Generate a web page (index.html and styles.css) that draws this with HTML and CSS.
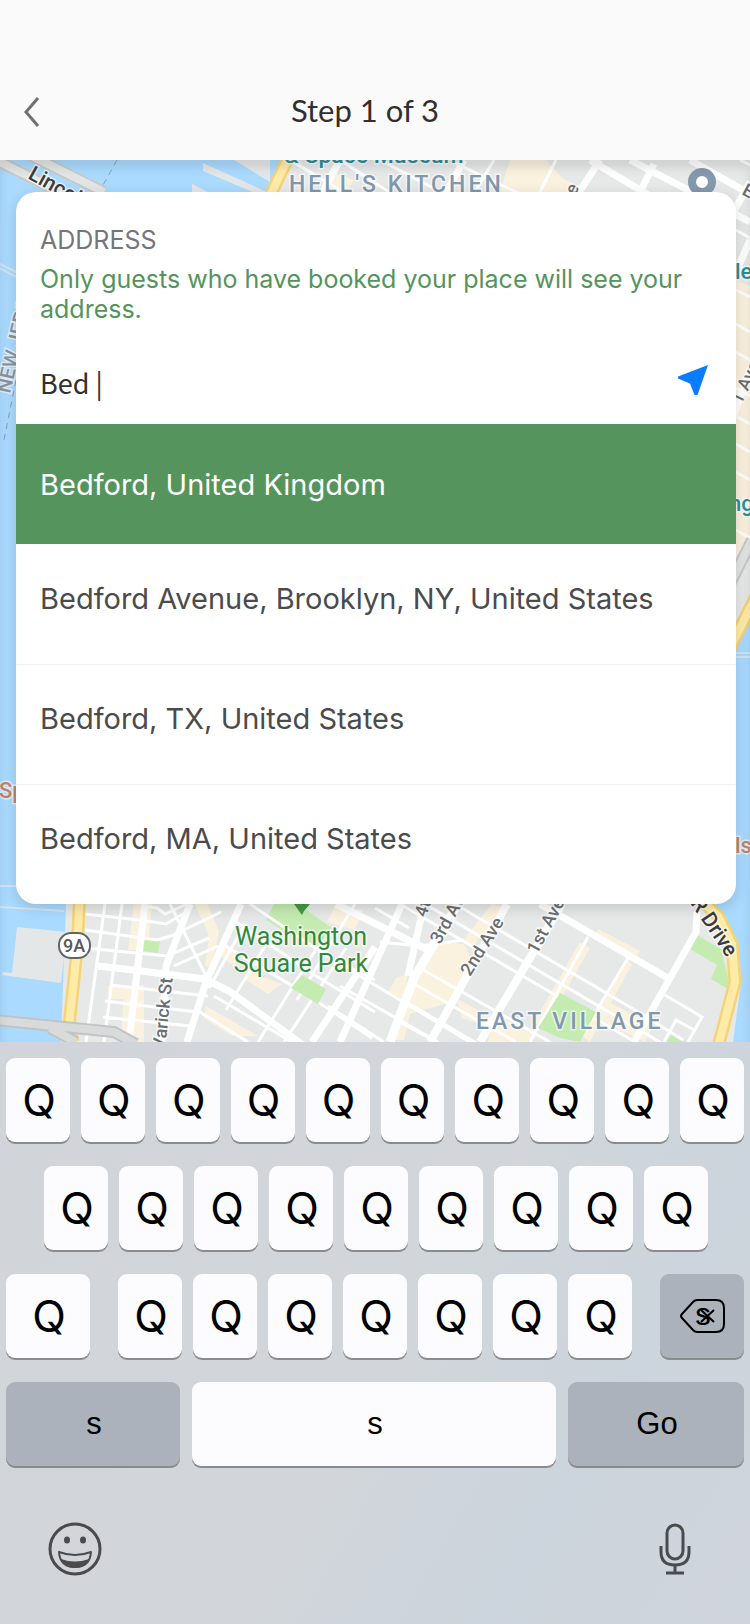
FILE: index.html
```html
<!DOCTYPE html>
<html lang="en">
<head>
  <meta charset="UTF-8">
  <meta name="viewport" content="width=device-width, initial-scale=1">
  <title>Step 1 of 3</title>
  <link rel="stylesheet" href="styles.css">
</head>
<body>

  <header class="topbar">
    <button type="button" class="back" aria-label="Back">
      <svg width="16" height="32" viewBox="0 0 16 32"><path d="M14 2L2 16l12 14" fill="none" stroke="#6f7072" stroke-width="3"/></svg>
    </button>
    <h1>Step 1 of 3</h1>
  </header>

  <main class="map-area">
    <svg class="map" viewBox="0 160 750 882" preserveAspectRatio="xMidYMin slice" aria-hidden="true">
      <rect y="160" width="750" height="882" fill="#e7e9e9"/>

      <!-- built up blocks -->
      <g fill="#faf1de">
        <path d="M510 160h36l16 18 22 12-10 14h-78zM330 172l24 8-12 20h-28z"/>
        <path d="M736 280l14 6v264l-14 22z"/>
        <path d="M134 904h18l-4 46h-20zM195 904h13l11 28-8 36-6-2 4-30zM226 944l14 10-6 12-14-10zM108 985h36v64h-23l2-50h-15zM250 972l32 12-14 10-22-14zM206 1006l52 30h-26l-28-18zM335 906l28 4-8 20-28-8z"/>
        <path d="M492 904l16 4-18 36-12-6-4 10-12-6zM430 940l34 4 8 16-20 42-42 12-6 26h-12zM396 978l12-4-4 26-16-8zM456 998l40 22-4 8-30-10zM496 1016l40 18-4 8h-44z"/>
        <path d="M598 929l42 22-4 6-42-20zM580 942l10 6-46 80-10-6zM626 960l6 4-42 78-8-6zM605 1000l48 25-8 17-50-24z"/>
      </g>

      <!-- rivers -->
      <g fill="#aadaff">
        <path d="M0 160h284l-20 34L80 860l-14 44-5 138H0z"/>
        <path d="M750 612v430h-17l8-60-3-34-14-28-30-30V690z"/>
      </g>
      <path d="M17 927l50 5-6 51-59-8 1-3 9 1z" fill="#e4e7e7"/>
      <path d="M203 163l66 30h-14l-52-22zM192 184l24 12h-24zM234 160h36v22z" fill="#e4e7e7"/>
      <path d="M0 886h16M0 907l64 4M0 268l18 10M0 264l18 9M734 653h16M734 657h16" fill="none" stroke="#d3e5f3" stroke-width="2"/>
      <path d="M117 160L97 196M16 380L4 440" fill="none" stroke="#8aa0b2" stroke-dasharray="6 5"/>

      <!-- parks -->
      <g fill="#c4ecb1">
        <path d="M274 904h24l34 24-17 21-49-29zM143 939l17 2-2 12-15-2zM697 935l24 14 10 42-20-12 6-14-27-16zM672 1034l12 8h-18z"/>
      </g>

      <!-- small streets -->
      <g fill="none" stroke="#fff" stroke-width="3">
        <path d="M380 160l80 42M455 163l80 38M290 160l60 36M340 160l52 34M470 200l24-40M536 200l20-40M740 160l10 5"/>
        <path d="M85 914l55 6 26 4 20-12M85 930l72 10 14-4 50-24M85 948l82 8 42-18M110 985l98 11M105 1001l92 11M103 1017l87 9M105 904L86 1042M122 904l-18 138M170 904l37 74M174 966l44-20M145 906l12 2 8 6 22-10"/>
        <path d="M233 920l80 54 62 38M222 944l84 50 66 44M250 904l80 54 45 22M214 996l78 46M200 1012l48 30M245 924l-36 64M270 938l-44 72M318 946l-60 96M346 948l-62 94M355 904l-58 96"/>
        <path d="M375 908l34 20M380 942l40 4 44-6M400 904l300 176M425 904l262 154M455 904l180 106 48 30M350 970l80 48 40 24M340 986l98 56M420 968l130 74M414 984l102 58M406 1002l72 42M396 1020l44 24M328 1006l56 36"/>
        <path d="M588 937l-58 105M628 958l-50 84M665 995l37 22-14 25M664 1042l12-22 18 10"/>
        <path d="M736 230l14 8M736 290l14 7M736 324l14 8M736 352l14 8M736 388l14 8M736 416l14 8M736 444l14 8M736 472l14 8M736 530l14 8"/>
      </g>
      <path d="M302 975l24 14-8 15-27-16zM560 993l36 19-16 30-20-4-22-10z" fill="#c4ecb1"/>

      <!-- avenues -->
      <g fill="none" stroke="#fff" stroke-width="7">
        <path d="M318 200l22-40M442 200l22-40M574 200l26-40M636 200l18-36M590 160l70 42M630 160l120 62M690 160l60 34M750 182l-22 40M750 240l-20 46M750 370l-20 56"/>
        <path d="M145 904l-16 138M190 904l-24 62-4 76M241 904l-35 78-19 60M98 966l35 4 72 9 24 12 74 54M375 947l-63 95M336 904l92 46"/>
        <path d="M402 904l-62 138M424 904l-16 72M540 904l128 74" />
        <path d="M458 904l-44 74-24 64" stroke-width="9"/>
        <path d="M507 904l-77 138M562 904l-82 138" stroke-width="8"/>
        <path d="M697 912l-1 20-62 110"/>
      </g>

      <!-- highways -->
      <g fill="none">
        <path d="M80 890l-3 60-8 76 4 16M294 146l-24 50M756 596l-40 80M690 890l28 26 14 28 3 38-12 46-6 22" stroke="#f4d477" stroke-width="13"/>
        <path d="M80 890l-3 60-8 76 4 16M294 146l-24 50M756 596l-40 80M690 890l28 26 14 28 3 38-12 46-6 22" stroke="#ffeba8" stroke-width="8"/>
        <path d="M-4 1020l58 6 60 6 22 12M50 1028l26 14" stroke="#bfc5c5" stroke-width="12"/>
        <path d="M-4 1020l58 6 60 6 22 12M50 1028l26 14" stroke="#d9dbdb" stroke-width="8"/>
        <path d="M-4 160l50 25 60 28M24 152l80 40M752 540l-24 48" stroke="#c6caca" stroke-width="12"/>
        <path d="M-4 160l50 25 60 28M24 152l80 40M752 540l-24 48" stroke="#e3e5e5" stroke-width="8"/>
      </g>

      <path d="M294 904h16l-6 7-2 4-3-4z" fill="#429a46"/>
      <circle cx="702" cy="182" r="10" fill="#fff" stroke="#8499ad" stroke-width="8"/>
      <rect x="59" y="933" width="31" height="25" rx="12" fill="#fff" stroke="#626569" stroke-width="2"/>

      <g class="map-label">
        <text x="284" y="163" font-size="23" fill="#2f8e96">&amp; Space Museum</text>
        <text x="289" y="192" class="district">HELL'S KITCHEN</text>
        <text x="476" y="1029" class="district">EAST VILLAGE</text>
        <text x="301" y="945" class="park">Washington</text>
        <text x="301" y="972" class="park">Square Park</text>
        <text x="74" y="952" font-size="18" text-anchor="middle" fill="#55585c">9A</text>
        <text transform="translate(27 178) rotate(29)" font-size="21" fill="#3c3a3a">Lincoln</text>
        <text transform="translate(10 394) rotate(-77)" font-size="20" fill="#8d9499">NEW JERSEY</text>
        <text transform="translate(165 1050) rotate(-84)" class="street">Varick St</text>
        <text transform="translate(426 918) rotate(-72)" class="street">4th Ave</text>
        <text transform="translate(440 945) rotate(-61)" class="street">3rd Ave</text>
        <text transform="translate(470 977) rotate(-58)" class="street">2nd Ave</text>
        <text transform="translate(537 955) rotate(-62)" class="street">1st Avenue</text>
        <text transform="translate(575 196) rotate(-62)" class="street">e</text>
        <text transform="translate(741 194) rotate(28)" class="street">E</text>
        <text transform="translate(741 405) rotate(-64)" class="street">1 Ave</text>
        <text transform="translate(690 903) rotate(56)" font-size="21" fill="#3c3a3a">R Drive</text>
        <text x="735" y="279" font-size="22" fill="#2f8e96">le</text>
        <text x="729" y="511" font-size="22" fill="#2f8e96">ng</text>
        <text x="735" y="853" font-size="22" fill="#c1866a">ls</text>
        <text x="-1" y="798" font-size="22" fill="#c1866a">Sp</text>
      </g>
    </svg>

    <form class="card">
      <div class="card-head">
        <label for="address">ADDRESS</label>
        <p>Only guests who have booked your place will see your address.</p>
      </div>
      <div class="search">
        <input type="text" id="address" value="Bed |" autocomplete="off">
        <button type="button" class="locate" aria-label="Use my location">
          <svg width="30" height="30" viewBox="0 0 30 30"><path d="M30 0L0 11.500v2l12 5L16.500 30h3z" fill="#0a7cff"/></svg>
        </button>
      </div>
      <ul class="results">
        <li><button type="button" class="result active">Bedford, United Kingdom</button></li>
        <li><button type="button" class="result">Bedford Avenue, Brooklyn, NY, United States</button></li>
        <li><button type="button" class="result">Bedford, TX, United States</button></li>
        <li><button type="button" class="result">Bedford, MA, United States</button></li>
      </ul>
    </form>
  </main>

  <section class="keyboard" aria-label="Keyboard">
    <div class="row">
      <button type="button" class="key">Q</button>
      <button type="button" class="key">Q</button>
      <button type="button" class="key">Q</button>
      <button type="button" class="key">Q</button>
      <button type="button" class="key">Q</button>
      <button type="button" class="key">Q</button>
      <button type="button" class="key">Q</button>
      <button type="button" class="key">Q</button>
      <button type="button" class="key">Q</button>
      <button type="button" class="key">Q</button>
    </div>
    <div class="row row-inset">
      <button type="button" class="key">Q</button>
      <button type="button" class="key">Q</button>
      <button type="button" class="key">Q</button>
      <button type="button" class="key">Q</button>
      <button type="button" class="key">Q</button>
      <button type="button" class="key">Q</button>
      <button type="button" class="key">Q</button>
      <button type="button" class="key">Q</button>
      <button type="button" class="key">Q</button>
    </div>
    <div class="row row-wide">
      <button type="button" class="key key-side">Q</button>
      <div class="row letters">
        <button type="button" class="key">Q</button>
        <button type="button" class="key">Q</button>
        <button type="button" class="key">Q</button>
        <button type="button" class="key">Q</button>
        <button type="button" class="key">Q</button>
        <button type="button" class="key">Q</button>
        <button type="button" class="key">Q</button>
      </div>
      <button type="button" class="key key-side dark" aria-label="Delete">
        <svg width="46" height="36" viewBox="0 0 46 36">
          <path d="M17 2h19q8 0 8 8v16q0 8-8 8H17q-2 0-4-2L2 20q-2-2 0-4L13 4q2-2 4-2z" fill="none" stroke="#000" stroke-width="2"/>
          <path d="M21 12l13 12M34 12L21 24" stroke="#000" stroke-width="2"/>
          <text x="23" y="27" class="del-text">s</text>
        </svg>
      </button>
    </div>
    <div class="row row-bottom">
      <button type="button" class="key dark">s</button>
      <button type="button" class="key">s</button>
      <button type="button" class="key dark">Go</button>
    </div>
    <div class="tools">
      <button type="button" aria-label="Emoji">
        <svg width="54" height="54" viewBox="0 0 54 54">
          <circle cx="27" cy="27" r="25" fill="none" stroke="#4b4b4b" stroke-width="3"/>
          <ellipse cx="19" cy="18" rx="3" ry="3.500" fill="#4b4b4b"/>
          <ellipse cx="35" cy="18" rx="3" ry="3.500" fill="#4b4b4b"/>
          <path d="M11 30q16 6 32 0-1 15-16 15T11 30z" fill="none" stroke="#4b4b4b" stroke-width="2" stroke-linejoin="round"/>
          <path d="M13 37q14 5 28 0-3 9-14 9t-14-9z" fill="#4b4b4b"/>
        </svg>
      </button>
      <button type="button" aria-label="Dictate">
        <svg width="54" height="54" viewBox="0 0 54 54">
          <g fill="none" stroke="#4b4b4b" stroke-width="3">
            <rect x="19" y="3" width="16" height="34" rx="8"/>
            <path d="M13 24v6q0 13 14 13t14-13v-6M27 43v8M18 51h18"/>
          </g>
        </svg>
      </button>
    </div>
  </section>

</body>
</html>
```
FILE: styles.css
```css
* {
  box-sizing: border-box;
}

body {
  margin: 0;
  min-height: 100vh;
  display: flex;
  flex-direction: column;
  font-family: Inter, sans-serif;
  background-color: #d1d5db;
}

button {
  padding: 0;
  border: none;
  background: none;
  font-family: inherit;
  cursor: pointer;
}

svg {
  display: block;
}

/* header */
.topbar {
  display: flex;
  align-items: center;
  padding: 64px 24px 0;
  height: 160px;
  background-color: #fafafa;
}

.back {
  width: 32px;
}

.topbar h1 {
  flex: 1;
  margin: 0;
  padding: 0 52px 4px 0;
  font-family: Lato, sans-serif;
  font-size: 31px;
  font-weight: 400;
  line-height: 40px;
  text-align: center;
  color: #322f2e;
}

/* map and address card */
.map-area {
  position: relative;
  padding: 32px 14px 138px 16px;
  overflow: hidden;
  box-shadow: inset 0 8px 10px rgba(0, 0, 0, 0.1);
}

.map {
  position: absolute;
  inset: 0;
  z-index: -1;
  width: 100%;
  height: 100%;
}

.map-label {
  font-family: Roboto, sans-serif;
  font-weight: 500;
  paint-order: stroke;
  stroke: rgba(255, 255, 255, 0.6);
  stroke-width: 3px;
}

.district {
  font-size: 23px;
  letter-spacing: 3px;
  fill: #8198ad;
}

.park {
  font-size: 25px;
  font-weight: 400;
  text-anchor: middle;
  fill: #2f8a39;
}

.street {
  font-size: 18px;
  fill: #6b6e71;
}

.card {
  overflow: hidden;
  border-radius: 20px;
  background-color: #fff;
  box-shadow: 0 4px 14px rgba(0, 0, 0, 0.15);
}

.card-head {
  padding: 32px 24px 0;
}

.card-head label {
  display: block;
  font-size: 25px;
  line-height: 32px;
  color: #75767a;
}

.card-head p {
  margin: 8px 0 0;
  font-size: 25px;
  line-height: 30px;
  color: #55945d;
}

.search {
  display: flex;
  align-items: center;
  height: 100px;
  padding: 16px 28px 0 24px;
}

.search input {
  flex: 1;
  min-width: 0;
  padding: 0;
  border: none;
  outline: none;
  background: none;
  font-family: "Noto Sans CJK SC", sans-serif;
  font-size: 27px;
  color: #322f2e;
}

.locate {
  padding-bottom: 4px;
}

.results {
  margin: 0;
  padding: 0;
  list-style: none;
}

.results li + li + li {
  border-top: 1px solid #efefef;
}

.result {
  width: 100%;
  height: 120px;
  padding: 0 24px 12px;
  font-size: 29px;
  text-align: left;
  color: #4b4b4d;
}

.results li + li + li .result {
  height: 119px;
}

.result.active {
  padding-bottom: 0;
  background-color: #55945d;
  color: #fff;
}

/* keyboard */
.keyboard {
  flex: 1;
  display: flex;
  flex-direction: column;
  gap: 24px;
  padding: 16px 6px 48px;
  background: linear-gradient(120deg, #d1d5db, #d2d6da 50%, #ccd4dd 75%, #d0d5dc);
}

.row {
  display: flex;
  gap: 11px;
}

.row-inset {
  padding: 0 36px 0 38px;
}

.row-wide {
  gap: 28px;
}

.letters {
  flex: 1;
}

.key {
  flex: 1;
  display: flex;
  align-items: center;
  justify-content: center;
  height: 84px;
  padding-left: 2px;
  border-radius: 9px;
  background-color: #fcfcfe;
  box-shadow: 0 2px 0 #898b8e;
  font-size: 44px;
  color: #000;
}

.key-side {
  flex: 0 0 84px;
}

.dark {
  background-color: #abb2bc;
}

.row-bottom {
  display: grid;
  grid-template-columns: 174fr 364fr 176fr;
  gap: 12px;
}

.row-bottom .key,
.del-text {
  font-family: "Liberation Sans", Arial, sans-serif;
  font-size: 31px;
}

.del-text {
  text-anchor: middle;
}

.tools {
  display: flex;
  justify-content: space-between;
  padding: 32px 42px 0;
}
```
